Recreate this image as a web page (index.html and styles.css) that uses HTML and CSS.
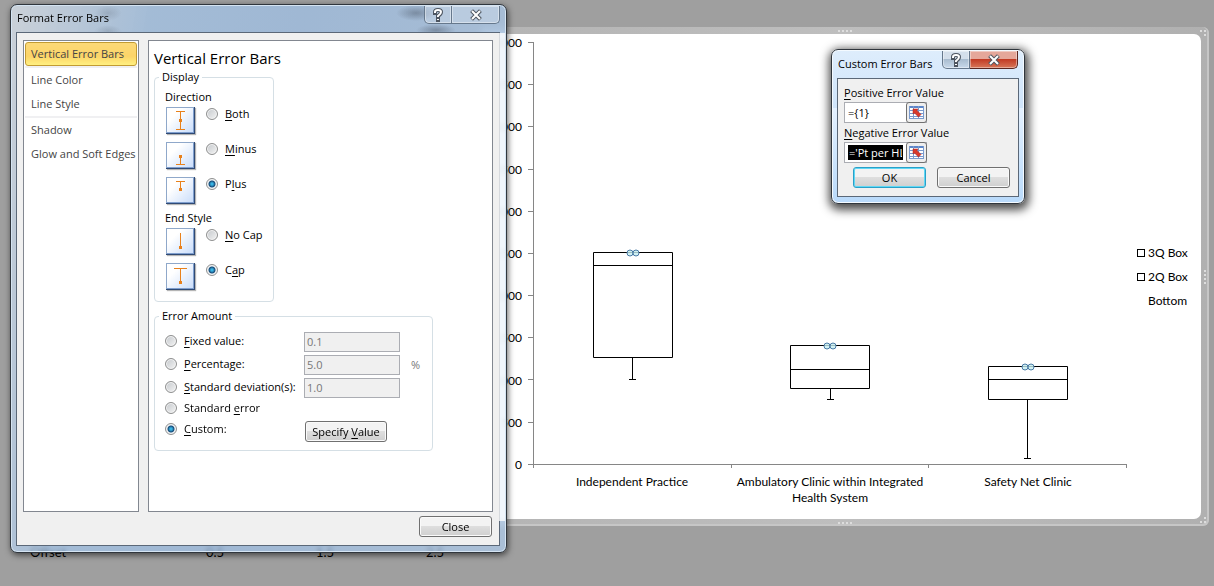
FILE: index.html
```
<!DOCTYPE html>
<html lang="en">
<head>
<meta charset="utf-8">
<title>Format Error Bars</title>
<link rel="stylesheet" href="styles.css">
</head>
<body>
<main class="sheet">
  <section class="chart-frame" aria-label="Box plot">
    <i class="grip grip-top"></i><i class="grip grip-bottom"></i><i class="grip grip-right"></i>
    <i class="corner corner-top"></i><i class="corner corner-bottom"></i>
    <div class="chart">
      <div class="y-axis">
        <span>5000</span><span>4500</span><span>4000</span><span>3500</span><span>3000</span><span>2500</span><span>2000</span><span>1500</span><span>1000</span><span>500</span><span>0</span>
      </div>
      <svg class="plot" viewBox="527 35 604 438" aria-hidden="true">
        <path class="axis" d="M533.5 42V468M528 42.5h5M528 84.500h5M528 126.500h5M528 169.500h5M528 211.500h5M528 253.500h5M528 295.500h5M528 337.500h5M528 379.500h5M528 422.500h5M528 464.500h599M731.500 464v4M928.500 464v4M1126.500 464v4"/>
        <g class="box">
          <path d="M593.500 252.500h79v105h-79zM593.500 265.500h79M632.500 357v22M629 379.500h7"/>
          <path d="M790.500 345.500h79v43h-79zM790.500 369.500h79M830.500 388v11M827 399.500h7"/>
          <path d="M988.500 366.500h79v33h-79zM988.500 379.500h79M1027.500 399v59M1024 458.500h7"/>
        </g>
        <g class="handle">
          <circle cx="630" cy="253" r="3"/><circle cx="636" cy="253" r="3"/>
          <circle cx="827" cy="346" r="3"/><circle cx="833" cy="346" r="3"/>
          <circle cx="1025" cy="367" r="3"/><circle cx="1031" cy="367" r="3"/>
        </g>
      </svg>
      <ul class="legend">
        <li><i class="key"></i>3Q Box</li>
        <li><i class="key"></i>2Q Box</li>
        <li><i class="key key-none"></i>Bottom</li>
      </ul>
      <div class="categories">
        <span>Independent Practice</span>
        <span>Ambulatory Clinic within Integrated Health System</span>
        <span>Safety Net Clinic</span>
      </div>
    </div>
  </section>
  <div class="cells"><span>Offset</span><span>0.5</span><span>1.5</span><span>2.5</span></div>
</main>

<section class="window format-window" aria-labelledby="format-title">
  <header class="title-bar">
    <h1 id="format-title">Format Error Bars</h1>
    <div class="caption-buttons">
      <button class="help" aria-label="Help"><svg viewBox="0 0 12 14" width="12" height="14"><path class="glyph-edge" d="M3 5V4Q3 2 6 2t3 2q0 2-3 4v1M6 11v1"/><path class="glyph" d="M3 5V4Q3 2 6 2t3 2q0 2-3 4v1M6 11v1"/></svg></button>
      <button class="close" aria-label="Close window"><svg viewBox="0 0 14 12" width="14" height="12"><path class="glyph-edge" d="M4 3l6 6M10 3l-6 6"/><path class="glyph" d="M3 2l8 8M11 2l-8 8"/></svg></button>
    </div>
  </header>
  <div class="client">
    <div class="panes">
      <nav class="tabs">
        <a class="tab selected" href="#vertical">Vertical Error Bars</a>
        <a class="tab ruled" href="#color">Line Color</a>
        <a class="tab" href="#style">Line Style</a>
        <a class="tab ruled" href="#shadow">Shadow</a>
        <a class="tab" href="#glow">Glow and Soft Edges</a>
      </nav>
      <form class="page" id="vertical">
        <h2>Vertical Error Bars</h2>
        <fieldset class="display">
          <legend>Display</legend>
          <p class="sub">Direction</p>
          <div class="choice">
            <svg class="thumb" viewBox="0 0 29 27"><path d="M10 4.500h9M10 22.500h9M14.500 4v19"/><rect x="13" y="12" width="3" height="3"/></svg>
            <label><input type="radio" name="direction"><span><u>B</u>oth</span></label>
          </div>
          <div class="choice">
            <svg class="thumb" viewBox="0 0 29 27"><path d="M10 22.500h9M14.500 13v10"/><rect x="13" y="13" width="3" height="3"/></svg>
            <label><input type="radio" name="direction"><span><u>M</u>inus</span></label>
          </div>
          <div class="choice">
            <svg class="thumb" viewBox="0 0 29 27"><path d="M10 4.500h9M14.500 4v10"/><rect x="13" y="11" width="3" height="3"/></svg>
            <label><input type="radio" name="direction" checked><span>P<u>l</u>us</span></label>
          </div>
          <p class="sub">End Style</p>
          <div class="choice">
            <svg class="thumb" viewBox="0 0 29 27"><path d="M14.500 5v15"/><rect x="13" y="18" width="3" height="3"/></svg>
            <label><input type="radio" name="end"><span><u>N</u>o Cap</span></label>
          </div>
          <div class="choice">
            <svg class="thumb" viewBox="0 0 29 27"><path d="M8 5.500h13M14.500 5v15"/><rect x="13" y="18" width="3" height="3"/></svg>
            <label><input type="radio" name="end" checked><span>C<u>a</u>p</span></label>
          </div>
        </fieldset>
        <fieldset class="amount">
          <legend>Error Amount</legend>
          <div class="amount-row"><label><input type="radio" name="amount"><span><u>F</u>ixed value:</span></label><input class="field" type="text" value="0.1" aria-label="Fixed value" disabled></div>
          <div class="amount-row"><label><input type="radio" name="amount"><span><u>P</u>ercentage:</span></label><input class="field" type="text" value="5.0" aria-label="Percentage" disabled><span class="unit">%</span></div>
          <div class="amount-row"><label><input type="radio" name="amount"><span><u>S</u>tandard deviation(s):</span></label><input class="field" type="text" value="1.0" aria-label="Standard deviation" disabled></div>
          <div class="amount-row short"><label><input type="radio" name="amount"><span>Standard <u>e</u>rror</span></label></div>
          <div class="amount-row"><label><input type="radio" name="amount" checked><span><u>C</u>ustom:</span></label><button class="button specify" type="button">Specify <u>V</u>alue</button></div>
        </fieldset>
      </form>
    </div>
    <footer><button class="button">Close</button></footer>
  </div>
</section>

<section class="window custom-window" aria-labelledby="custom-title">
  <header class="title-bar">
    <h1 id="custom-title">Custom Error Bars</h1>
    <div class="caption-buttons">
      <button class="help" aria-label="Help"><svg viewBox="0 0 12 14" width="12" height="14"><path class="glyph-edge" d="M3 5V4Q3 2 6 2t3 2q0 2-3 4v1M6 11v1"/><path class="glyph" d="M3 5V4Q3 2 6 2t3 2q0 2-3 4v1M6 11v1"/></svg></button>
      <button class="close" aria-label="Close window"><svg viewBox="0 0 14 12" width="14" height="12"><path class="glyph-edge" d="M4 3l6 6M10 3l-6 6"/><path class="glyph" d="M3 2l8 8M11 2l-8 8"/></svg></button>
    </div>
  </header>
  <form class="client">
    <label for="positive"><u>P</u>ositive Error Value</label>
    <div class="range">
      <input id="positive" type="text" value="={1}">
      <button type="button" aria-label="Select positive range"><svg viewBox="0 0 17 15" width="17" height="15"><path fill="#fff" d="M1 1h15v13H1z"/><path fill="#5c86c8" d="M1 1h15v2H1z"/><path stroke="#7a9ace" fill="none" d="M1 5.500h15M1 8.500h15M1 11.500h15M1 13.500h15M1.500 1v13M5.500 1v13M10.500 1v13M15.500 1v13"/><path fill="#d8392b" stroke="#a92018" stroke-width=".5" d="M5 4h5L9 5.500l4 4-2.500 2.500-4-4L5 9z"/></svg></button>
    </div>
    <label for="negative"><u>N</u>egative Error Value</label>
    <div class="range">
      <span class="selection"><input id="negative" type="text" value="='Pt per HLP"></span>
      <button type="button" aria-label="Select negative range"><svg viewBox="0 0 17 15" width="17" height="15"><path fill="#fff" d="M1 1h15v13H1z"/><path fill="#5c86c8" d="M1 1h15v2H1z"/><path stroke="#7a9ace" fill="none" d="M1 5.500h15M1 8.500h15M1 11.500h15M1 13.500h15M1.500 1v13M5.500 1v13M10.500 1v13M15.500 1v13"/><path fill="#d8392b" stroke="#a92018" stroke-width=".5" d="M5 4h5L9 5.500l4 4-2.500 2.500-4-4L5 9z"/></svg></button>
    </div>
    <div class="actions"><button class="button default" type="button">OK</button><button class="button" type="button">Cancel</button></div>
  </form>
</section>
</body>
</html>
```

FILE: styles.css
```
* { box-sizing: border-box; }
body {
  margin: 0;
  min-height: 100vh;
  background: #9f9f9f;
  color: #000;
  font: 11px/14px "Open Sans", "Noto Sans", sans-serif;
  overflow: hidden;
}
h1, h2, p, ul { margin: 0; padding: 0; font-weight: 400; }
button, input { font: inherit; color: inherit; margin: 0; }
u { text-underline-offset: 2px; }

/* Sheet and chart */
.sheet { padding: 27px 5px 0 0; }
.chart-frame {
  position: relative;
  margin-left: 480px;
  padding: 7px 8px 7px 7px;
  background: linear-gradient(90deg, #b4b4b4, #bebebe 50%, #b0b0b0);
  border-radius: 6px;
  box-shadow: inset -1px -1px 0 1px #c6c6c6;
}
.chart {
  display: grid;
  grid-template-columns: 40px 1fr 70px;
  padding: 1px 0 13px;
  background: #fff;
  border-radius: 0 7px 7px 0;
  font: 12px/16px Lato, "Open Sans", sans-serif;
}
.y-axis {
  display: flex;
  flex-direction: column;
  justify-content: space-between;
  padding-right: 5px;
  text-align: right;
}
.plot { display: block; width: 100%; }
.axis { fill: none; stroke: #868686; }
.box { fill: none; stroke: #000; }
.handle { fill: #c5eef0; fill-opacity: .8; stroke: #4a7ba6; }
.legend {
  align-self: center;
  padding: 46px 0 0 6px;
  list-style: none;
  line-height: 24px;
}
.legend li { display: flex; align-items: center; gap: 3px; }
.key { width: 8px; height: 8px; border: 1px solid #000; }
.key-none { border-color: transparent; }
.categories {
  grid-column: 2;
  display: grid;
  grid-template-columns: repeat(3, 1fr);
  min-height: 33px;
  padding: 1px 4px 0 6px;
  text-align: center;
}
.grip { position: absolute; width: 14px; height: 2px; background: repeating-linear-gradient(90deg, #ddd 0 2px, transparent 2px 4px); }
.grip-top { top: 3px; left: 50%; margin-left: -7px; }
.grip-bottom { bottom: 2px; left: 50%; margin-left: -7px; }
.grip-right { right: 3px; top: 50%; width: 2px; height: 14px; margin-top: -7px; background: repeating-linear-gradient(#ddd 0 2px, transparent 2px 4px); }
.corner { position: absolute; right: 3px; width: 6px; height: 6px; border: dotted #ddd; border-width: 2px 2px 0 0; }
.corner-top { top: 3px; }
.corner-bottom { bottom: 3px; border-width: 0 2px 2px 0; }
.cells {
  display: grid;
  grid-template-columns: 176px 110px 110px 1fr;
  padding: 16px 0 0 30px;
  font: 13px/20px Lato, "Open Sans", sans-serif;
}

/* Windows */
.window {
  position: absolute;
  padding: 1px 6px 6px;
  border: 1px solid #30363d;
  border-radius: 7px;
}
.format-window {
  top: 4px;
  left: 10px;
  width: 497px;
  padding-right: 7px;
  background:
    radial-gradient(ellipse 14px 8px at 97px 8px, rgba(70,80,95,.2), transparent),
    radial-gradient(ellipse 14px 6px at 97px 26px, rgba(70,80,95,.2), transparent),
    radial-gradient(ellipse 20px 8px at 405px 8px, rgba(60,70,85,.4), transparent),
    radial-gradient(ellipse 20px 6px at 425px 25px, rgba(60,70,85,.4), transparent),
    linear-gradient(100deg, rgba(226,236,247,.65), rgba(165,200,238,.7) 24%, rgba(160,195,235,.7) 50%, rgba(175,205,238,.7));
  backdrop-filter: blur(2px);
  box-shadow: inset 0 0 0 1px #d5e4f2, 1px 2px 6px rgba(0,0,0,.6);
}
.format-window::before {
  content: "";
  position: absolute;
  right: 1px;
  top: 28px;
  width: 6px;
  height: 488px;
  background: rgba(255,255,255,.75);
}
.custom-window {
  top: 49px;
  left: 831px;
  width: 194px;
  background: linear-gradient(#deedfc, #cfe4fa 38%, #e4f1ff 38%, #b9dafb);
  box-shadow: inset 0 0 0 1px #f4faff, 1px 3px 10px 3px rgba(0,0,0,.7);
}
.title-bar { display: flex; justify-content: space-between; height: 26px; }
.title-bar h1 { font-size: 11px; line-height: 24px; white-space: nowrap; }
.caption-buttons { display: flex; height: 18px; }
.caption-buttons button {
  display: flex;
  align-items: center;
  justify-content: center;
  width: 28px;
  padding: 0;
  border: 1px solid #66788c;
  border-top: 0;
  border-radius: 0 0 0 5px;
  background: rgba(215,226,238,.4);
  box-shadow: inset 0 0 0 1px rgba(255,255,255,.4);
}
.caption-buttons .close { width: 48px; border-left: 0; border-radius: 0 0 5px 0; }
.custom-window .help { background: linear-gradient(#d4dfeb 50%, #a9bccf 50%, #c8d9ea); }
.custom-window .close { border-color: #5a2620; background: linear-gradient(#e5a79a 48%, #c23c25 50%, #d87759); }
.glyph-edge, .glyph { fill: none; stroke: #4d5560; stroke-width: 4; stroke-linecap: square; }
.glyph { stroke: #fff; stroke-width: 2; stroke-linecap: butt; }
.client { border: 1px solid #5b6878; background: #f0f0f0; }
.format-window .title-bar { margin-right: -1px; }
.format-window .client { margin: 0 -1px; padding: 7px 6px 8px; }

/* Format dialog */
.panes { display: flex; gap: 9px; }
.tabs {
  flex: 0 0 116px;
  padding: 1px;
  border: 1px solid #828790;
  background: #fff;
}
.tab {
  display: block;
  padding: 0 0 0 6px;
  color: #444;
  line-height: 24px;
  text-decoration: none;
  white-space: nowrap;
}
.tab.selected {
  padding-left: 5px;
  border: 1px solid #c29b33;
  border-radius: 3px;
  background: linear-gradient(#fcd978, #fcd468 60%, #fff080);
  line-height: 22px;
}
.ruled { border-top: 2px solid #f0f0f2; }
.page {
  flex: 1;
  min-height: 472px;
  padding: 6px 5px;
  border: 1px solid #828790;
  background: #fff;
}
.page h2 { font-size: 15px; line-height: 22px; }
fieldset {
  margin: 0;
  padding: 0 0 0 10px;
  border: 1px solid #d5dfe5;
  border-radius: 4px;
}
legend { margin-left: -6px; padding: 0 3px; }
.display { width: 120px; height: 232px; margin-top: 1px; }
.sub { padding-top: 6px; }
.choice + .sub { padding-top: 2px; }
.choice { display: flex; gap: 11px; padding: 3px 0 5px 1px; }
.thumb {
  width: 29px;
  height: 27px;
  background: linear-gradient(135deg, #fff 30%, #c5dafa);
  box-shadow: inset -1px -1px 0 #2f4a75, inset 1px 1px 0 #8fa8ca, inset -2px -2px 0 #7f9fcf, 1px 1px 1px #b5b5b5;
}
.thumb path { fill: none; stroke: #e8811c; }
.thumb rect { fill: #e8811c; }
label { display: flex; align-items: flex-start; gap: 7px; white-space: nowrap; }
input[type="radio"] {
  appearance: none;
  flex: none;
  width: 12px;
  height: 12px;
  margin-top: 1px;
  border: 1px solid #8e8f8f;
  border-radius: 50%;
  background: linear-gradient(135deg, #c4c8cc, #f4f4f4);
  box-shadow: inset 0 0 0 1px #f4f4f4;
}
input[type="radio"]:checked {
  background: radial-gradient(circle at 50% 50%, #38b4e4 1px, #164a78 3px, #e8eef2 4px);
}
.amount { width: 279px; height: 142px; margin-top: 7px; }
.amount-row {
  display: grid;
  grid-template-columns: 139px 96px 1fr;
  align-items: center;
  min-height: 23px;
}
.amount label { padding-bottom: 2px; }
.amount legend + .amount-row { margin-top: 7px; }
.amount-row.short { min-height: 19px; }
.field {
  width: 96px;
  height: 20px;
  padding: 0 2px;
  border: 1px solid #abadb3;
  background: #f0f0f0;
  color: #777;
}
.unit { padding-left: 11px; color: #777; }
.button {
  width: 73px;
  height: 21px;
  padding: 0;
  border: 1px solid #707070;
  border-radius: 3px;
  background: linear-gradient(#f3f3f3 50%, #dedede 50%, #cfcfcf);
  box-shadow: inset 0 0 0 1px #fafafa;
}
.specify { width: 82px; margin: 3px 0 0 1px; }
footer { display: flex; justify-content: flex-end; padding: 4px 1px 0 0; }

/* Custom dialog */
.custom-window .title-bar { height: 27px; }
.custom-window .title-bar h1 { line-height: 26px; }
.custom-window .client { margin: 0 -1px; padding: 7px 6px 8px; }
.custom-window .client label { display: block; }
.range { display: flex; width: 83px; height: 21px; margin: 2px 0 3px; border: 1px solid #abadb3; background: #fff; }
.range input { width: 61px; min-width: 0; padding: 0 0 0 3px; border: 0; background: none; }
.range button { flex: none; width: 21px; height: 21px; margin: -1px -1px 0 0; padding: 1px; border: 1px solid #707070; border-radius: 3px; background: #eee; }
.range button svg { display: block; }
.selection { width: 61px; padding: 2px 3px; }
.selection input { display: block; width: 55px; height: 15px; padding: 0 1px; background: #000; color: #fff; }
.actions { display: flex; gap: 11px; padding: 1px 0 0 9px; }
.default { border-color: #2aa0c8; box-shadow: inset 0 0 0 1px #5fd8f5; }
```
